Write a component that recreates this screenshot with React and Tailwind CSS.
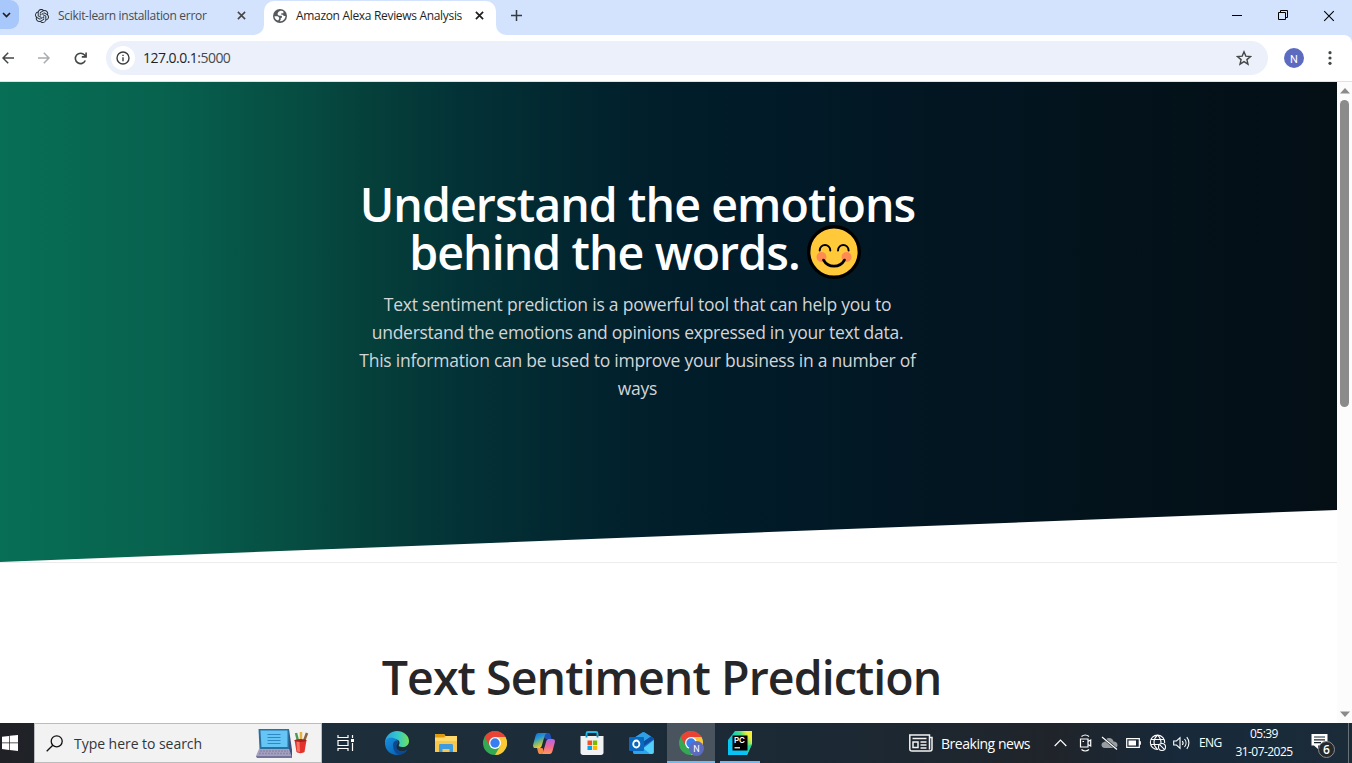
import React from "react";
import { SiOpenai } from "react-icons/si";

function Globe() {
  return (
    <svg className="h-[14px] w-[14px] shrink-0" viewBox="0 0 14 14">
      <circle cx="7" cy="7" r="7" fill="#55595e" />
      <path d="M6.500 2.200C5.300 2.800 4.600 3.800 4.600 5c0 1.100.9 1.700 2.100 1.700h1.100c.8 0 1.200.4 1.200 1.100 0 .8-.5 1.200-1.300 1.200v1.700l-1 1.600c3.300 0 5.700-2.300 5.800-5.300h-1.600L9.800 5.700H8.300V4.300h2.100V2.400C9.300 1.600 7.900 1.500 6.500 2.200Z" fill="#fff" />
      <path d="M1.500 7.200h3.300l1.300 1.400v1.500l-1 1.300C3 10.900 1.500 9.300 1.500 7.200Z" fill="#fff" />
    </svg>
  );
}

function Cross({ className }) {
  return (
    <svg className={className} viewBox="0 0 10 10" fill="none" stroke="currentColor">
      <path d="m1 1 8 8M9 1 1 9" />
    </svg>
  );
}

function TabStrip() {
  return (
    <div className="flex h-[35px] shrink-0 items-start bg-[#d3e3fd]">
      <div className="flex h-[29px] w-[19px] items-center justify-center rounded-r-[9px] bg-[#a8c7fa] pr-[7px]">
        <svg className="h-[6px] w-[9px] shrink-0" viewBox="0 0 9 6" fill="none" stroke="#1f1f1f" strokeWidth="1.7"><path d="m1 1 3.500 3.500L8 1" /></svg>
      </div>
      <div className="flex h-[31px] w-[245px] items-center pl-4">
        <SiOpenai className="h-[14px] w-[14px] shrink-0 text-[#22272b]" />
        <span className="ml-[9px] w-[176px] whitespace-nowrap text-[12px] tracking-[-0.31px] text-[#474b50]">Scikit-learn installation error</span>
        <Cross className="ml-[3px] h-[9px] w-[9px] text-[#444] [stroke-width:1.7]" />
      </div>
      <div className="relative mt-px flex h-[34px] w-[232px] items-center rounded-t-[10px] bg-white pb-[5px] pl-[9px]">
        <svg className="absolute -left-[10px] bottom-0 h-[10px] w-[10px]" viewBox="0 0 10 10"><path d="M10 0v10H0A10 10 0 0 0 10 0Z" fill="#fff" /></svg>
        <svg className="absolute -right-[10px] bottom-0 h-[10px] w-[10px]" viewBox="0 0 10 10"><path d="M0 0v10h10A10 10 0 0 1 0 0Z" fill="#fff" /></svg>
        <Globe />
        <span className="ml-[9px] w-[168px] whitespace-nowrap text-[12px] tracking-[-0.32px] text-[#1f1f1f]">Amazon Alexa Reviews Analysis</span>
        <Cross className="ml-[11px] h-[9px] w-[9px] text-[#1f1f1f] [stroke-width:1.9]" />
      </div>
      <svg className="ml-[15px] mt-[10px] h-[11px] w-[11px]" viewBox="0 0 11 11" stroke="#333a43" strokeWidth="1.500"><path d="M5.500 0v11M0 5.500h11" /></svg>
      <div className="ml-auto flex h-[31px] items-center pr-[17px]">
        <svg className="h-[11px] w-[11px]" viewBox="0 0 11 11" stroke="#000"><path d="M0 5.500h10" /></svg>
        <svg className="ml-[35px] h-[11px] w-[11px]" viewBox="0 0 11 11" fill="none" stroke="#000"><path d="M.5 2.500h7v7h-7zM2.500 2.500v-2h7v7h-2" /></svg>
        <Cross className="ml-[34px] h-[12px] w-[12px] text-black [stroke-width:.9]" />
      </div>
    </div>
  );
}

function Toolbar() {
  return (
    <div className="bg-[#d3e3fd]">
      <div className="flex h-[47px] items-start rounded-tr-[8px] border-b border-[#dfe3e8] bg-white pt-[6px]">
        <div className="flex h-[34px] w-[106px] items-center">
          <svg className="ml-[2px] h-[12px] w-[12px]" viewBox="0 0 12 12" fill="none" stroke="#444746" strokeWidth="1.500"><path d="M12 6H1M6.200.8 1 6l5.200 5.200" /></svg>
          <svg className="ml-[24px] h-[12px] w-[12px]" viewBox="0 0 12 12" fill="none" stroke="#a9abad" strokeWidth="1.500"><path d="M0 6h11M5.800.8 11 6l-5.200 5.200" /></svg>
          <svg className="ml-[24px] h-[13px] w-[13px]" viewBox="0 0 13 13" fill="none" stroke="#444746" strokeWidth="1.600"><path d="M11.300 8.500A5.200 5.200 0 1 1 10.500 3l1.500 1.700M12.100.6v4.300H7.800" /></svg>
        </div>
        <div className="flex h-[34px] w-[1162px] items-center rounded-full bg-[#ecf0fa] pl-[5px] pr-4">
          <div className="flex h-6 w-6 items-center justify-center rounded-full bg-white">
            <svg className="h-[14px] w-[14px]" viewBox="0 0 14 14" fill="none" stroke="#3a3d40" strokeWidth="1.400"><circle cx="7" cy="7" r="6" /><path d="M7 6.200v4M7 3.700v1.400" /></svg>
          </div>
          <span className="ml-2 whitespace-nowrap pb-[2px] text-[14px] tracking-[-0.53px] text-[#1f1f1f]">127.0.0.1<span className="text-[#474b50]">:5000</span></span>
          <svg className="ml-auto h-4 w-4" viewBox="0 0 16 16" fill="none" stroke="#444746" strokeWidth="1.400"><path d="m8 1.800 1.800 4.300 4.700.4-3.600 3.100 1.100 4.600L8 11.700l-4 2.500 1.100-4.600-3.600-3.100 4.700-.4Z" /></svg>
        </div>
        <div className="ml-4 mt-[7px] flex h-5 w-5 items-center justify-center rounded-full bg-[#5c6bc0] pt-[2px] font-['Roboto',sans-serif] text-[11px] leading-none text-white">N</div>
        <svg className="ml-[24px] mt-[10px] h-[14px] w-[4px]" viewBox="0 0 4 14" fill="#444746"><circle cx="2" cy="1.700" r="1.600" /><circle cx="2" cy="7" r="1.600" /><circle cx="2" cy="12.300" r="1.600" /></svg>
      </div>
    </div>
  );
}

function Smile() {
  return (
    <svg className="h-[54px] w-[54px] shrink-0" viewBox="0 0 54 54" fill="none">
      <circle cx="27" cy="27" r="25.300" fill="#ffc93a" stroke="#000" strokeWidth="3.400" />
      <circle cx="14.500" cy="32" r="5" fill="#ff8b54" />
      <circle cx="39.500" cy="32" r="5" fill="#ff8b54" />
      <path d="M12.700 25.500c.3-7.300 10.300-7.300 10.600 0M31 25.500c.3-7.300 10.300-7.300 10.600 0" stroke="#000" strokeWidth="2" strokeLinecap="round" />
      <path d="M16.500 35c4.500 8.200 16.500 8.200 21 0" stroke="#000" strokeWidth="2.600" strokeLinecap="round" />
    </svg>
  );
}

function Page() {
  return (
    <div className="flex h-[641px] shrink-0">
      <main className="w-[1337px] overflow-hidden bg-white">
        <section className="border-b border-[#ececec]">
          <div className="flex h-[480px] flex-col items-center bg-[linear-gradient(90deg,#076f56_0%,#07624e_12%,#064d42_22%,#053f3a_28%,#033136_35%,#02262f_43%,#011e2b_49%,#021724_66%,#03131c_82%,#040e15_100%)] pr-[62px] pt-[98px] [clip-path:polygon(0_0,100%_0,100%_428px,0_480px)]">
            <h1 className="text-center text-[46.5px] font-semibold leading-[48px] tracking-[-0.92px] text-white">
              <span className="block h-12 whitespace-nowrap">Understand the emotions</span>
              <span className="flex h-12 items-center justify-center gap-[7px] whitespace-nowrap pr-[5px]">behind the words.<Smile /></span>
            </h1>
            <p className="mt-[14px] text-center text-[17.5px] leading-7 text-[#d3d5d8]">
              <span className="block whitespace-nowrap tracking-[-0.22px]">Text sentiment prediction is a powerful tool that can help you to</span>
              <span className="block whitespace-nowrap tracking-[-0.28px]">understand the emotions and opinions expressed in your text data.</span>
              <span className="block whitespace-nowrap tracking-[-0.24px]">This information can be used to improve your business in a number of</span>
              <span className="block tracking-[-0.24px]">ways</span>
            </p>
          </div>
        </section>
        <section className="flex justify-center pr-[14px] pt-[85px]">
          <h2 className="whitespace-nowrap text-[46.5px] font-semibold leading-[58px] tracking-[-0.95px] text-[#262628]">Text Sentiment Prediction</h2>
        </section>
      </main>
      <div className="flex w-[15px] flex-col items-center bg-[#fcfcfc] py-[6px]">
        <svg className="h-[6px] w-[10px] shrink-0" viewBox="0 0 10 6" fill="#8b8b8b"><path d="M5 0 10 5.500H0Z" /></svg>
        <div className="mt-[6px] h-[307px] w-[9px] shrink-0 rounded-full bg-[#8b8b8b]" />
        <svg className="mt-auto h-[6px] w-[10px] shrink-0" viewBox="0 0 10 6" fill="#8b8b8b"><path d="M0 .5h10L5 6Z" /></svg>
      </div>
    </div>
  );
}

function Chrome() {
  return (
    <svg className="h-6 w-6" viewBox="0 0 24 24">
      <circle cx="12" cy="12" r="12" fill="#35a853" />
      <path d="M1.600 6A12 12 0 0 1 22.400 6H12v6L6.800 15Z" fill="#e94335" />
      <path d="M22.400 6A12 12 0 0 1 12 24l5.200-9L12 6Z" fill="#fcc934" />
      <circle cx="12" cy="12" r="6" fill="#fff" /><circle cx="12" cy="12" r="4.700" fill="#397ef0" />
    </svg>
  );
}

function Edge() {
  return (
    <svg className="h-6 w-6" viewBox="0 0 24 24">
      <defs>
        <linearGradient id="eg"><stop offset="0" stopColor="#279fe0" /><stop offset=".55" stopColor="#36c9cb" /><stop offset="1" stopColor="#70e252" /></linearGradient>
        <linearGradient id="eb" x2="1" y2="1"><stop stopColor="#1590e0" /><stop offset="1" stopColor="#0756a5" /></linearGradient>
      </defs>
      <path d="M0 12C0 5 5.500 0 12 0s12 4.500 12 10c0 4-3 6-6.500 6-3 0-4-1-3.700-2 1.500-2 1-6-4.800-6C4.500 8 0 11 0 12Z" fill="url(#eg)" />
      <path d="M0 12c0-4 4-6 8.500-5 3 .6 4.700 2.500 4.700 5-2.700 1-4 6 1 8 3.200 1.200 6.500 0 8.300-1.400C20.400 22 16.500 24 12 24 5 24 0 18.800 0 12Z" fill="url(#eb)" />
      <path d="M8 14c0-2.600 1.500-4.400 3.500-4.600 1.200.6 1.700 1.500 1.700 2.600-2.500 2-2.500 6.500 1.500 8 3 1.100 6 .1 7.800-1.400C20.400 22 16.500 24 14 23.700 10 23 8 18 8 14Z" fill="#0b4a92" />
    </svg>
  );
}

function Folder() {
  return (
    <svg className="h-[18px] w-[22px]" viewBox="0 0 22 18">
      <path d="M0 0h9l1.500 2H22v16H0Z" fill="#f8c84d" /><path d="M0 0h9l1.300 2L9 3.500H0Z" fill="#df9b0c" /><path d="M0 3.700h9.500L11 2h11v5H0Z" fill="#ffd969" />
      <path d="M4 11.500C4 10.400 4.700 10 5.500 10h11c1 0 1.500.5 1.500 1.500V18h-3.500v-3h-7v3H4Z" fill="#3f9be0" />
    </svg>
  );
}

function Copilot() {
  return (
    <svg className="h-[21px] w-[22px]" viewBox="0 0 22 21">
      <defs>
        <linearGradient id="ca" x2=".4" y2="1"><stop stopColor="#1269db" /><stop offset=".4" stopColor="#2595d4" /><stop offset=".7" stopColor="#84b96a" /><stop offset="1" stopColor="#f4cd28" /></linearGradient>
        <linearGradient id="cb" x2="0" y2="1"><stop stopColor="#ad67e8" /><stop offset=".5" stopColor="#ef6698" /><stop offset="1" stopColor="#ff9a54" /></linearGradient>
      </defs>
      <path d="M12 0h3c1.500 0 2 .6 2.500 2l1 4h-5.500L10 4Z" fill="#1f51b6" />
      <path d="M5.500 0H14c-1.500.5-2 1.500-2.400 3L8.800 12.500C8.200 14.500 7.300 15 6 15H2.500C.5 15-.3 13.700.2 11.500L2.500 3C3 1 4 0 5.500 0Z" fill="url(#ca)" />
      <path d="M16.500 21H8c1.500-.5 2-1.500 2.400-3l2.800-9.500C13.800 6.500 14.700 6 16 6h3.500c2 0 2.800 1.300 2.300 3.500L19.500 18c-.5 2-1.500 3-3 3Z" fill="url(#cb)" />
      <path d="M4 15h5.500l1 3c-.5 2-1 3-2.500 3H7c-1 0-1.600-.6-2-2Z" fill="#f28b48" />
    </svg>
  );
}

function Store() {
  return (
    <svg className="h-6 w-6" viewBox="0 0 24 24">
      <path d="M6.500 7V2.500C6.500 1.400 7 1 8 1h8c1 0 1.500.4 1.500 1.500V7" fill="none" stroke="#29b8e3" strokeWidth="1.800" />
      <path d="M.5 5h23v16.500c0 1.500-1 2.500-2.500 2.500H3C1.500 24 .5 23 .5 21.500Z" fill="#f1f2f3" />
      <path d="M6.500 4v2.500M17.500 4v2.500" stroke="#168eb9" strokeWidth="1.800" />
      <path d="M7.500 9.500H12V14H7.500Z" fill="#f15322" /><path d="M12.800 9.500h4.400V14h-4.400Z" fill="#7db900" /><path d="M7.500 14.700H12V19H7.500Z" fill="#00a5ef" /><path d="M12.800 14.700h4.400V19h-4.400Z" fill="#ffb900" />
    </svg>
  );
}

function Outlook() {
  return (
    <svg className="h-[22px] w-[25px]" viewBox="0 0 25 22">
      <path d="M4 6.500 13.300.6c.8-.6 1.600-.6 2.400 0L24.200 6c.5.300.6.600.6 1.200V20c0 1.200-.6 2-2 2H6c-1.300 0-2-.7-2-2Z" fill="#1b78d0" />
      <path d="M5 6 13.300.6c.8-.6 1.600-.6 2.400 0L22 4.600 14 10Z" fill="#2f9fe6" />
      <path d="M22 4.600 24.200 6c.5.300.6.600.6 1.200L15 14V9.200Z" fill="#0c4fa5" />
      <path d="M24.800 8v12c0 1.200-.6 2-2 2H7Z" fill="#52cffb" />
      <path d="m14 16 7 6H6c-1.300 0-2-.7-2-2v-2Z" fill="#2ba5ee" />
      <rect y="5" width="15" height="14" rx="1" fill="#0869be" />
      <ellipse cx="7.300" cy="12" rx="3.100" ry="3.500" fill="none" stroke="#fff" strokeWidth="1.800" />
    </svg>
  );
}

function PyCharm() {
  return (
    <div className="relative h-6 w-6">
      <svg className="h-6 w-6" viewBox="0 0 24 24">
        <defs><linearGradient id="py" x1=".1" y1=".7" x2="1" y2=".1"><stop stopColor="#08c4f6" /><stop offset=".35" stopColor="#14cbc9" /><stop offset=".6" stopColor="#3fdd83" /><stop offset=".85" stopColor="#f3ef38" /></linearGradient></defs>
        <path d="M7 0h17v13l-5 11H0V9Z" fill="url(#py)" /><path d="M17 24h2l5-11-5 2Z" fill="#22d6a4" /><path d="M0 19.500h19.500L18.500 24H0Z" fill="#08c4f6" /><path d="M4.500 4.500h15v15h-15Z" fill="#000" /><path d="M6.500 16.800h5.500" stroke="#fff" strokeWidth="1.200" />
      </svg>
      <span className="absolute left-[6px] top-[5px] font-['Inter',sans-serif] text-[8px] font-semibold leading-[9px] tracking-[-0.2px] text-white">PC</span>
    </div>
  );
}

function Laptop() {
  return (
    <svg className="h-[32px] w-[54px]" viewBox="0 0 54 32">
      <path d="M2.500 2h30.500v20H3.500Z" fill="#2b6f9f" /><path d="M4.500 3.500h27V20h-26Z" fill="#65c6f6" />
      <path d="M11.500 7.500h13M11.500 10.500h13M11.500 13.500h13M11.500 16.500h13" stroke="#2f88c6" strokeWidth="1.200" />
      <path d="M3 22h30l3 6v2.500H1L0 29Z" fill="#a3a1bf" /><path d="M4 24h28M3 26.500h31" stroke="#8a88a6" strokeWidth="1.300" strokeDasharray="2 1" /><path d="M0 29h36v2H1Z" fill="#74739a" /><path d="m33 2 3 21v7.500L33 22Z" fill="#3f4f7c" />
      <path d="m42 14-2-8" strokeWidth="2.500" stroke="#4d9a55" /><path d="M45 14V5" stroke="#e4b23b" strokeWidth="2.500" /><path d="m48 14 3-8" stroke="#8c643b" strokeWidth="2.500" />
      <path d="M38.500 13h12l-2 12c-2 1.500-6 1.500-8 0Z" fill="#e3312c" /><path d="M40.500 14h3l.5 11c-1 0-2-.3-3-.7Z" fill="#f57363" /><ellipse cx="44.500" cy="13.500" rx="6" ry="1.500" fill="#a81f24" />
    </svg>
  );
}

function Tray() {
  return (
    <div className="ml-auto flex h-10 items-center text-white">
      <svg className="h-[18px] w-[24px]" viewBox="0 0 24 18" fill="none" stroke="#f2f2f2" strokeWidth="1.500"><path d="M20.500 3.500H23V15c0 1.200-.7 2-2 2H3c-1.500 0-2.200-.8-2.200-2V1h19.700v14.500M3.500 4.500h14M4 8h5v5.500H4ZM11.500 8h6M11.500 11h6M11.500 14h6" /></svg>
      <span className="ml-2 w-[105px] whitespace-nowrap text-[14px] tracking-[-0.47px]">Breaking news</span>
      <svg className="ml-[8px] h-[8px] w-[13px]" viewBox="0 0 13 8" fill="none" stroke="#fff" strokeWidth="1.200"><path d="m.7 7 5.800-5.800L12.300 7" /></svg>
      <svg className="ml-[12px] h-[18px] w-[14px]" viewBox="0 0 14 18" fill="none" stroke="#fff" strokeWidth="1.200"><path d="M1.500 5H9v8H1.500ZM9 7.500 11.700 6v6L9 10.500M2.500 2.500c2.500-2 5-2 7.500 0M2.500 15.500c2.500 2 5 2 7.500 0M3.500 7.500H5" /></svg>
      <svg className="ml-[8px] h-[14px] w-[17px]" viewBox="0 0 17 14"><path d="M4 12C1.500 12 .5 10.500.5 9c0-1.800 1.300-3 3-3C4 3.200 6 2 8 2c2.500 0 4 1.500 4.500 3.500C15 5.500 16.500 7 16.500 9s-1 3-3 3Z" fill="#9a9d9f" /><path d="m1 1 15 12.500" stroke="#18242c" strokeWidth="2.400" /><path d="m1 1 15 12.500" stroke="#fff" strokeWidth="1.200" /></svg>
      <svg className="ml-[8px] h-[10px] w-[15px]" viewBox="0 0 15 10"><path d="M.7.7h12.600v8.600H.7ZM14.300 3.200v3.500" fill="none" stroke="#fff" strokeWidth="1.200" /><path d="M2.500 2.500H10v5H2.500Z" fill="#fff" /></svg>
      <svg className="ml-[8px] h-[18px] w-[18px]" viewBox="0 0 18 18" fill="none" stroke="#fff" strokeWidth="1.100"><path d="M9 15.500A7.200 7.200 0 1 1 15.700 9M8.500 15.500C3.800 11 3.800 5.500 8.500 1.200 11 3.500 12 6 12 9M1.500 5.500h14M1.300 10.500H10" /><circle cx="13" cy="13" r="3.500" /><path d="m10.600 10.600 4.800 4.800" /></svg>
      <svg className="ml-[6px] h-[14px] w-[17px]" viewBox="0 0 17 14" fill="none" stroke="#fff" strokeWidth="1.100"><path d="M.7 5h2.800L7 1.700v10.600L3.500 9H.7ZM9.300 5c1 1.200 1 2.800 0 4M11.500 3c2 2.300 2 5.700 0 8M13.800 1.200c2.800 3.400 2.800 8.200 0 11.600" /></svg>
      <span className="ml-[9px] w-[25px] whitespace-nowrap text-[12px] tracking-[-0.6px]">ENG</span>
      <div className="ml-[9px] w-[62px] whitespace-nowrap text-center text-[12px] leading-[18px] tracking-[-0.55px]"><div>05:39</div><div>31-07-2025</div></div>
      <div className="relative ml-[16px] h-[28px] w-[37px]">
        <svg className="h-[20px] w-[17px]" viewBox="0 0 17 20"><path d="M.5 5h16v11.500H7V20l-4-3.500H.5Z" fill="#fff" /><path d="M3 8h11M3 10.800h11M3 13.600h7" stroke="#18242f" strokeWidth="1.200" /></svg>
        <div className="absolute left-[7px] top-[12px] flex h-[17px] w-[17px] items-center justify-center rounded-full border border-[#8a8d90] bg-[#26282b] text-[12px] font-semibold leading-none">6</div>
      </div>
      <div className="h-10 w-px bg-[#66717a]" /><div className="w-[3px]" />
    </div>
  );
}

function Taskbar() {
  return (
    <footer className="flex h-10 shrink-0 items-center bg-[linear-gradient(90deg,#202126_0,#1d2e3b_26%,#1b2935_60%,#20242a_78%,#17293a_87%,#1b2b38_100%)]">
      <div className="flex w-[34px] items-center pl-[2px]"><svg className="h-4 w-4" viewBox="0 0 16 16" fill="#fff"><path d="M0 1.800 7 .9v6.700H0ZM7.700.8 16 0v7.600H7.700ZM0 8.300h7V15l-7-.9ZM7.700 8.300H16V16l-8.300-.9Z" /></svg></div>
      <div className="flex h-10 w-[288px] items-center border border-[#bcbcbc] bg-[#f2f2f2] pl-[11px]">
        <svg className="h-[17px] w-[17px]" viewBox="0 0 17 17" fill="none" stroke="#111" strokeWidth="1.300"><circle cx="10.700" cy="6.300" r="5.500" /><path d="M6.800 10.200.7 16.300" /></svg>
        <span className="ml-[11px] w-[171px] whitespace-nowrap text-[14px] tracking-[-0.04px] text-[#30363b]">Type here to search</span>
        <div className="ml-[11px]"><Laptop /></div>
      </div>
      <svg className="ml-[15px] h-4 w-[18px]" viewBox="0 0 18 16" fill="none" stroke="#fff" strokeWidth="1.200"><path d="M1 0v2.500h10V0M1 5.500h10v5H1ZM1 16v-2.500h10V16M15.500 0v3M15.500 8v8" /><path d="M14 4h3v3h-3Z" fill="#fff" stroke="none" /></svg>
      <div className="ml-[30px]"><Edge /></div>
      <div className="ml-[26px]"><Folder /></div>
      <div className="ml-[26px]"><Chrome /></div>
      <div className="ml-[26px]"><Copilot /></div>
      <div className="ml-[25px]"><Store /></div>
      <div className="ml-[25px]"><Outlook /></div>
      <div className="relative ml-[13px] flex h-10 w-12 items-center justify-center border-b-2 border-[#76b9ed] bg-[#49545e] pt-[2px]">
        <Chrome />
        <div className="absolute left-[22px] top-[18px] flex h-[15px] w-[15px] items-center justify-center rounded-full bg-[#5c6bc0] pt-px font-['Roboto',sans-serif] text-[9px] leading-none text-white">N</div>
      </div>
      <div className="ml-[5px] flex h-10 w-10 items-center justify-center border-b-2 border-[#76b9ed] pt-[2px]"><PyCharm /></div>
      <Tray />
    </footer>
  );
}

export default function App() {
  return (
    <div className="flex h-[763px] w-[1352px] flex-col overflow-hidden bg-white font-['Open_Sans','Noto_Sans',sans-serif]">
      <TabStrip />
      <Toolbar />
      <Page />
      <Taskbar />
    </div>
  );
}
